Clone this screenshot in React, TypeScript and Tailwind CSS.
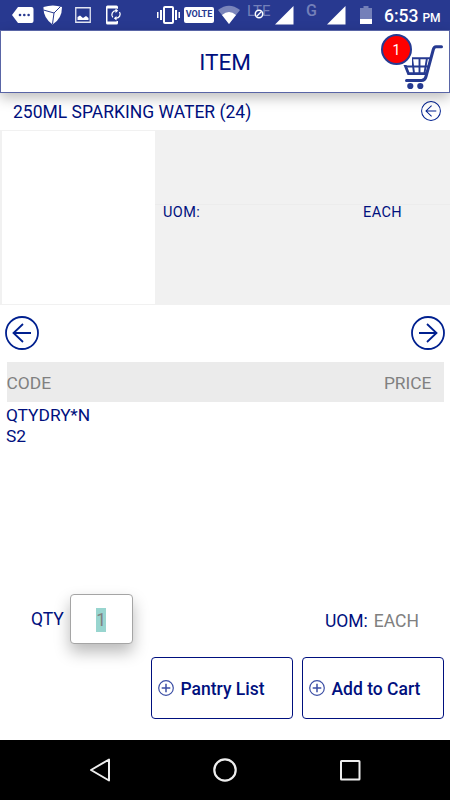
import type { ReactNode } from "react";

function StatusBar() {
  return (
    <div className="flex h-[30px] shrink-0 items-start bg-[#283990] text-white">
      {/* notifications */}
      <svg className="ml-3 mt-[7px] h-4 w-[22px]" viewBox="0 0 22 16" fill="currentColor">
        <path d="M6 0h13.500A2 2 0 0 1 21.500 2v12a2 2 0 0 1-2 2H6L0 8z" />
        <g fill="#283990">
          <circle cx="8" cy="8" r="1.300" />
          <circle cx="12.300" cy="8" r="1.300" />
          <circle cx="16.600" cy="8" r="1.300" />
        </g>
      </svg>
      <svg className="ml-[9px] mt-[5px] h-[20px] w-[20px]" viewBox="0 0 20 20" fill="currentColor">
        <path d="M.5 2Q10-1 19 2Q19 14 9.500 19.500Q0 13 .5 2z" />
        <path d="M.5 5L11 8L17.500 1.500M11 8L9.500 19" stroke="#283990" strokeWidth="1" fill="none" />
      </svg>
      <svg className="ml-3 mt-[7px] h-4 w-4" viewBox="0 0 16 16">
        <path d="M.75.75h14.500v14.500H.75z" fill="none" stroke="#e3e6f2" strokeWidth="1.300" />
        <path d="M2.500 13V10L5 8.500l3 2.500 3-2 2.500 2v2z" fill="currentColor" />
      </svg>
      <svg className="ml-[14px] mt-[5px] h-5 w-[17px]" viewBox="0 0 17 20">
        <path d="M13 4V2A1.500 1.500 0 0 0 11.500.5H2.500A1.500 1.500 0 0 0 1 2v16a1.500 1.500 0 0 0 1.500 1.500h9A1.500 1.500 0 0 0 13 18v-3" fill="currentColor" />
        <path d="M2.500 3.500H13.200v13H2.500z" fill="#283990" />
        <path d="M7.800 12.300A4 4 0 0 1 11 5.700M14.500 7A4 4 0 0 1 11 13.200" fill="none" stroke="currentColor" strokeWidth="1.300" />
        <path d="M10.500 3.500l2.700 2.200-2.700 2.200zM11.500 11v4.500l-2.700-2.300z" fill="currentColor" />
        <path d="M12.300 3.500V2M12.300 16v2" stroke="currentColor" strokeWidth="1.400" />
      </svg>

      {/* system icons */}
      <svg className="ml-[35px] mt-[6px] h-[18px] w-[23px]" viewBox="0 0 23 18" fill="currentColor">
        <path d="M0 6h1.500v6H0zM3 4h2v10H3zM18 4h2v10h-2zM21.500 6H23v6h-1.500z" />
        <rect x="7" y="1" width="9" height="16" rx="1" fill="none" stroke="currentColor" strokeWidth="2" />
      </svg>
      <div className="ml-1 mt-[7px] flex h-4 w-[30px] items-center justify-center rounded-[2px] bg-white text-[9px] font-bold text-[#283990]">
        VOLTE
      </div>
      <svg className="ml-1 mt-[5px] h-[19px] w-[22px]" viewBox="0 0 22 19">
        <path d="M0 5Q11-3.500 22 5L11 19z" fill="#7a85bb" />
        <path d="M4 10Q11 4 18 10L11 19z" fill="#fff" />
      </svg>
      <div className="relative ml-[7px] w-6 text-[15px] leading-[22px] text-[#7480b9]">
        LTE
        <svg className="absolute left-[7px] top-[9px] h-[10px] w-[10px]" viewBox="0 0 10 10">
          <circle cx="5" cy="5" r="3.700" fill="#283990" stroke="#fff" strokeWidth="1.500" />
          <path d="M2.800 7.200l4.400-4.400" stroke="#fff" strokeWidth="1.300" />
        </svg>
      </div>
      <Signal className="ml-1" />
      <div className="ml-3 w-[12px] text-[16px] font-medium leading-[22px] text-[#7480b9]">G</div>
      <Signal className="ml-[9px]" />
      <svg className="ml-[14px] mt-[5px] h-5 w-3" viewBox="0 0 12 20">
        <path d="M0 3h3.500V1h5v2H12v12H0z" fill="#7480b9" />
        <path d="M0 14h12v5H0z" fill="#fff" />
      </svg>
      <div className="ml-3 flex items-baseline whitespace-nowrap font-medium leading-[32px]">
        <span className="text-[17.500px]">6:53</span>
        <span className="ml-1 text-[12px]">PM</span>
      </div>
    </div>
  );
}

function Signal({ className }: { className: string }) {
  return (
    <svg className={`mt-[6px] h-[19px] w-[19px] ${className}`} viewBox="0 0 19 19">
      <path d="M0 18.500L18.500 0v18.500z" fill="#fff" />
    </svg>
  );
}

function ArrowCircle({ className, right, stroke }: { className: string; right?: boolean; stroke: number }) {
  return (
    <svg className={className} viewBox="0 0 34 34" fill="none" stroke="#00208f" strokeWidth={stroke}>
      <circle cx="17" cy="17" r="16" />
      <path d={right ? "M8 17h17M16 8l9.500 9-9.500 9" : "M26 17H9M18 8l-9.500 9 9.500 9"} />
    </svg>
  );
}

function CartIcon() {
  return (
    <svg className="h-[45px] w-[42px]" viewBox="0 0 42 45" fill="none" stroke="#263a91">
      <path d="M40.500 1.800H35Q33 1.800 32.300 4.500L25 31.500Q24 35.500 20.500 35.500H5.500" strokeWidth="3" strokeLinecap="round" />
      <path d="M3 17.500L7.500 28.700H25" strokeWidth="2.800" />
      <path d="M10 13.300H29.500M5 21.500H27.500M11 13L13 28M18.500 13V28M26 13L23.500 28" strokeWidth="1.900" />
      <circle cx="9.300" cy="41" r="3.100" fill="#263a91" stroke="none" />
      <circle cx="19.300" cy="41" r="3.100" fill="#263a91" stroke="none" />
    </svg>
  );
}

function ActionButton({ children }: { children: ReactNode }) {
  return (
    <button className="flex h-[62px] w-[142px] items-center rounded-[4px] border border-[#00107e] bg-white pl-[6px] text-[17.500px] font-medium text-[#00107e]">
      <svg className="mr-[6.500px] h-4 w-4 shrink-0" viewBox="0 0 16 16" fill="none" stroke="#3c4fa5" strokeWidth="1.200">
        <circle cx="8" cy="8" r="7.300" />
        <path d="M8 3.700v8.600M3.700 8h8.600" strokeWidth="1.500" />
      </svg>
      <span className="whitespace-nowrap pt-[3px]">{children}</span>
    </button>
  );
}

export default function App() {
  return (
    <div className="flex h-[800px] w-[450px] flex-col overflow-hidden bg-white font-['Roboto',sans-serif] text-[#00107e]">
      <StatusBar />

      <header className="relative z-10 flex h-[63px] shrink-0 items-center justify-center border border-[#5965a6] bg-white shadow-[0_5px_12px_rgba(0,0,0,0.25)]">
        <h1 className="pt-[2px] text-[22.500px] leading-none">ITEM</h1>
        <div className="absolute right-[6px] top-[14px]">
          <CartIcon />
          <div className="absolute -left-5 -top-[11px] h-[31px] w-[31px] bg-white">
            <span className="grid h-[31px] w-[31px] place-items-center rounded-full border-2 border-[#263a91] bg-[#fe0000] pt-px text-[14px] text-white">
              1
            </span>
          </div>
        </div>
      </header>

      <div className="flex h-[37px] shrink-0 items-center justify-between pl-[13px] pr-[9px]">
        <h2 className="pt-px text-[17.500px]">250ML SPARKING WATER (24)</h2>
        <ArrowCircle className="mb-px h-5 w-5" stroke={1.7} />
      </div>

      {/* product image and unit of measure */}
      <section className="flex h-[175px] shrink-0 bg-[#f1f1f1]">
        <div className="my-px ml-[2px] w-[153px] bg-white" />
        <div className="flex-1">
          <div className="h-[75px] border-b border-[#ececec]" />
          <div className="flex pl-[8px] pr-[48px] pt-px text-[14.500px] leading-[14px] tracking-[0.4px]">
            <span>UOM:</span>
            <span className="ml-auto">EACH</span>
          </div>
        </div>
      </section>

      <div className="flex h-[57px] shrink-0 items-center justify-between px-[5px] pb-px">
        <ArrowCircle className="h-[34px] w-[34px]" stroke={1.8} />
        <ArrowCircle className="h-[34px] w-[34px]" stroke={1.8} right />
      </div>

      <div className="ml-[6.500px] mr-[6.500px] flex h-10 shrink-0 items-center justify-between bg-[#ebebeb] pr-3 pt-[2px] text-[17.400px] text-[#808080]">
        <span>CODE</span>
        <span>PRICE</span>
      </div>
      <div className="ml-[6px] mt-[3px] w-[90px] break-all text-[17.400px] leading-[21px]">
        QTYDRY*N
        <br />
        S2
      </div>

      <div className="mt-auto flex h-[50px] shrink-0 items-center pl-[31px] pr-[31px] text-[17.500px]">
        <span>QTY</span>
        <div className="ml-[6px] grid h-[50px] w-[63px] place-items-center rounded-[4px] border border-[#a5a5a5] bg-white pt-px text-[#808080] shadow-[0_8px_16px_rgba(0,0,0,0.28)]">
          <span className="bg-[#98d5cf] leading-6">1</span>
        </div>
        <span className="ml-auto mt-[5px]">UOM:</span>
        <span className="ml-[6px] mt-[5px] text-[#808080]">EACH</span>
      </div>

      <div className="mb-[21px] mt-[13px] flex shrink-0 gap-[9px] pl-[151px]">
        <ActionButton>Pantry List</ActionButton>
        <ActionButton>Add to Cart</ActionButton>
      </div>

      <nav className="flex h-[60px] shrink-0 items-center justify-between bg-black pl-[88px] pr-[88px]">
        <svg className="h-6 w-6" viewBox="0 0 24 24" fill="none" stroke="#eee" strokeWidth="2" strokeLinejoin="round">
          <path d="M3 12L21 1.500v21z" />
        </svg>
        <svg className="h-6 w-6" viewBox="0 0 24 24" fill="none" stroke="#eee" strokeWidth="2.200">
          <circle cx="12" cy="12" r="10.700" />
        </svg>
        <svg className="h-6 w-6" viewBox="0 0 24 24" fill="none" stroke="#eee" strokeWidth="2">
          <rect x="3" y="3" width="18.500" height="18.500" rx=".5" />
        </svg>
      </nav>
    </div>
  );
}
